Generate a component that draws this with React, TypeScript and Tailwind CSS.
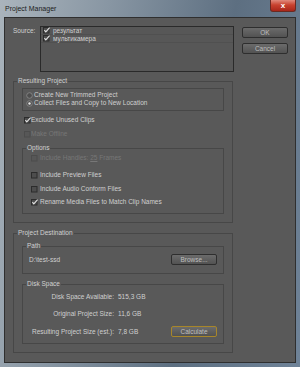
import React from "react";

const Check = (props: { checked?: boolean; disabled?: boolean }) => (
  <svg width="7" height="7" viewBox="0 0 7 7" className="shrink-0">
    <rect
      x="0.5"
      y="0.5"
      width="5.5"
      height="5.5"
      fill={props.disabled ? "#575757" : "#4d4d4d"}
      stroke={props.disabled ? "#4c4c4c" : "#2c2c2c"}
    />
    {props.checked && (
      <path d="M1.4 3.2 L2.8 4.9 L6.6 0.6" fill="none" stroke="#e2e2e2" strokeWidth="1.1" />
    )}
  </svg>
);

const Radio = (props: { on?: boolean }) => (
  <svg width="7" height="7" viewBox="0 0 7 7" className="shrink-0">
    <circle cx="3.5" cy="3.5" r="2.8" fill="#4e4e4e" stroke="#8c8c8c" strokeWidth="0.8" />
    {props.on && <circle cx="3.5" cy="3.5" r="1.2" fill="#e6e6e6" />}
  </svg>
);

const Btn = (props: { label: string; focus?: boolean }) => (
  <div
    className={
      "w-[46px] h-[11px] flex items-center justify-center rounded-[2px] border bg-[linear-gradient(#6b6b6b,#525252)] text-[#bfbfbf] leading-[8px] " +
      (props.focus ? "border-[#a7862a]" : "border-[#2e2e2e]")
    }
  >
    {props.label}
  </div>
);

const Row = (props: { children: React.ReactNode; className?: string }) => (
  <div className={"flex items-center h-[8px] leading-[8px] " + (props.className ?? "")}>{props.children}</div>
);

export default function App() {
  return (
    <div className="w-[300px] h-[367px] flex flex-col bg-[linear-gradient(100deg,#aab4bc_0%,#8896a3_30%,#5d6f81_65%,#6f8398_100%)] font-['Liberation_Sans',Arial,sans-serif] text-[6.5px] text-[#d0d0d0]">
      <div className="h-[17px] flex items-start shrink-0">
        <div className="pl-[5px] pt-[4px] text-[7px] leading-[9px] text-[#1c1c1c]">Project Manager</div>
        <div className="ml-auto mr-[4px] w-[26px] h-[12px] rounded-b-[3px] border border-t-0 border-[#6b2a22] bg-[linear-gradient(#e08a7c,#c8422f_45%,#a8261a)] flex items-center justify-center text-white text-[8px] font-bold leading-[8px]">
          x
        </div>
      </div>

      <div className="mx-[4px] h-[346px] border border-[#2f2f2f] bg-[#595959] pl-[8px] pt-[8px]">
        {/* source */}
        <div className="flex">
          <div className="w-[27px] pt-[1px] leading-[8px]">Source:</div>
          <div className="w-[194px] h-[46px] border border-[#2a2a2a] bg-[#575757]">
            <Row className="pl-[2px] border-b border-[#505050] h-[8px]">
              <Check checked />
              <span className="ml-[3px]">результат</span>
            </Row>
            <Row className="pl-[2px] border-b border-[#505050] h-[8px]">
              <Check checked />
              <span className="ml-[3px]">мультикамера</span>
            </Row>
          </div>
          <div className="ml-[8px] mt-[1px] flex flex-col gap-[5px]">
            <Btn label="OK" />
            <Btn label="Cancel" />
          </div>
        </div>

        {/* resulting project */}
        <fieldset className="mt-[5px] w-[220px] border border-[#474747] px-[8px] pb-[8px]">
          <legend className="-ml-[5px] px-[1px] leading-[8px]">Resulting Project</legend>
          <div className="mt-[3px] w-[202px] h-[23px] border border-[#474747] pl-[3px] pt-[2px]">
            <Row>
              <Radio />
              <span className="ml-[1px]">Create New Trimmed Project</span>
            </Row>
            <Row>
              <Radio on />
              <span className="ml-[1px]">Collect Files and Copy to New Location</span>
            </Row>
          </div>
          <Row className="mt-[5px] pl-[2px]">
            <Check checked />
            <span>Exclude Unused Clips</span>
          </Row>
          <Row className="mt-[6px] pl-[2px] text-[#777777]">
            <Check disabled />
            <span>Make Offline</span>
          </Row>
          <fieldset className="mt-[6px] w-[202px] border border-[#474747] pl-[8px] pb-[7px]">
            <legend className="-ml-[5px] px-[1px] leading-[8px]">Options</legend>
            <Row className="mt-[2px] text-[#777777]">
              <Check disabled />
              <span className="ml-[2px]">
                Include Handles: <span className="underline">25</span> Frames
              </span>
            </Row>
            <Row className="mt-[9px]">
              <Check />
              <span className="ml-[2px]">Include Preview Files</span>
            </Row>
            <Row className="mt-[6px]">
              <Check />
              <span className="ml-[2px]">Include Audio Conform Files</span>
            </Row>
            <Row className="mt-[5px]">
              <Check checked />
              <span className="ml-[2px]">Rename Media Files to Match Clip Names</span>
            </Row>
          </fieldset>
        </fieldset>

        {/* destination */}
        <fieldset className="mt-[6px] w-[220px] border border-[#474747] px-[8px] pb-[8px]">
          <legend className="-ml-[5px] px-[1px] leading-[8px]">Project Destination</legend>
          <fieldset className="mt-[5px] w-[202px] border border-[#474747] pl-[6px] pr-[6px] pb-[8px]">
            <legend className="-ml-[3px] px-[1px] leading-[8px]">Path</legend>
            <div className="mt-[4px] h-[11px] flex items-center justify-between leading-[8px]">
              <span>D:\test-ssd</span>
              <Btn label="Browse..." />
            </div>
          </fieldset>
          <fieldset className="mt-[6px] w-[202px] border border-[#474747] pb-[6px]">
            <legend className="ml-[3px] px-[1px] leading-[8px]">Disk Space</legend>
            <div className="mt-[5px] flex h-[8px] items-center leading-[8px]">
              <div className="w-[91px] text-right">Disk Space Available:</div>
              <div className="ml-[4px]">515,3 GB</div>
            </div>
            <div className="mt-[9px] flex h-[8px] items-center leading-[8px]">
              <div className="w-[91px] text-right">Original Project Size:</div>
              <div className="ml-[4px]">11,6 GB</div>
            </div>
            <div className="mt-[8px] flex h-[11px] items-center leading-[8px]">
              <div className="w-[91px] text-right">Resulting Project Size (est.):</div>
              <div className="ml-[4px] w-[53px]">7,8 GB</div>
              <Btn label="Calculate" focus />
            </div>
          </fieldset>
        </fieldset>
      </div>
    </div>
  );
}
